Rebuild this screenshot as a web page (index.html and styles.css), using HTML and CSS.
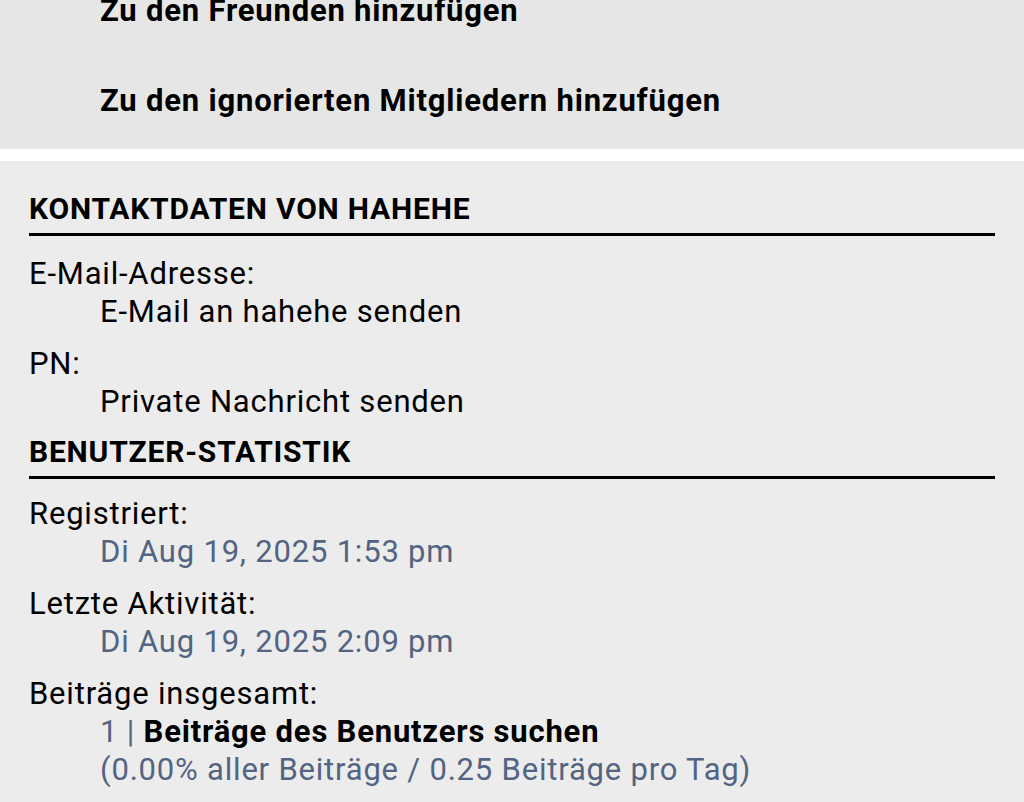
FILE: index.html
```html
<!DOCTYPE html>
<html lang="de">
<head>
  <meta charset="UTF-8" />
  <title>Profil von hahehe</title>
  <link rel="stylesheet" href="styles.css">
</head>
<body>
  <div id="wrapper">

    <div class="panel panel-actions">
      <ul class="action-list">
        <li><a href="#">Zu den Freunden hinzufügen</a></li>
        <li><a href="#">Zu den ignorierten Mitgliedern hinzufügen</a></li>
      </ul>
    </div>

    <div class="panel panel-details">
      <h3>Kontaktdaten von hahehe</h3>
      <dl class="details">
        <dt>E-Mail-Adresse:</dt>
        <dd><a href="#">E-Mail an hahehe senden</a></dd>
      </dl>
      <dl class="details">
        <dt>PN:</dt>
        <dd><a href="#">Private Nachricht senden</a></dd>
      </dl>

      <h3>Benutzer-Statistik</h3>
      <dl class="details">
        <dt>Registriert:</dt>
        <dd>Di Aug 19, 2025 1:53 pm</dd>
      </dl>
      <dl class="details">
        <dt>Letzte Aktivität:</dt>
        <dd>Di Aug 19, 2025 2:09 pm</dd>
      </dl>
      <dl class="details">
        <dt>Beiträge insgesamt:</dt>
        <dd>1 | <a href="#" class="strong">Beiträge des Benutzers suchen</a><br>(0.00% aller Beiträge / 0.25 Beiträge pro Tag)</dd>
      </dl>
    </div>

  </div>
</body>
</html>
```

FILE: styles.css
```css
html, body {
  margin: 0;
  padding: 0;
  background: #ffffff;
  font-family: Roboto, 'Noto Sans', sans-serif;
  font-size: 31px;
  letter-spacing: 0.8px;
  color: #000;
}

#wrapper {
  display: flex;
  flex-direction: column;
  gap: 12px;
  margin-top: -20px;
}

.panel {
  padding: 0 29px;
}

.panel-actions {
  background: #e6e6e6;
  padding-bottom: 29px;
}

.action-list {
  list-style: none;
  margin: 0;
  padding: 0 0 0 71px;
}

.action-list li {
  line-height: 38px;
  padding: 12px 0 40px;
}

.action-list li:last-child {
  padding-bottom: 0;
}

.action-list a {
  color: #000;
  font-weight: bold;
  text-decoration: none;
}

.panel-details {
  background: #ececec;
  padding-top: 29px;
  padding-bottom: 20px;
}

.panel-details h3 {
  margin: 0 0 5px;
  font-size: 30px;
  letter-spacing: 0.8px;
  font-weight: bold;
  text-transform: uppercase;
  line-height: 38px;
  padding-bottom: 5px;
  border-bottom: 3px solid #000;
}

.details {
  margin: 0;
  padding: 14px 0 0;
  line-height: 38px;
}

.details dt {
  color: #000;
}

.details dd {
  margin: 0 0 0 71px;
  color: #536482;
}

.details dd a {
  color: #000;
  text-decoration: none;
}

.details dd a.strong {
  font-weight: bold;
}

.details + h3 {
  margin-top: 12px;
  margin-bottom: 2px;
}
```
